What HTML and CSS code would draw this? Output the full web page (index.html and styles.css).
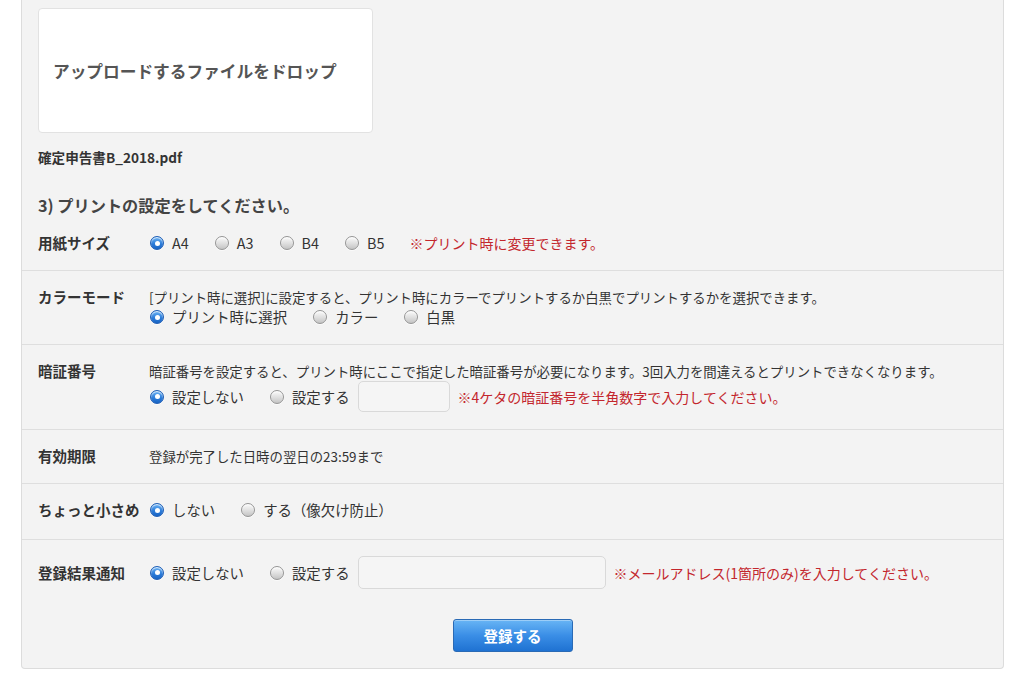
FILE: index.html
```html
<!DOCTYPE html>
<html lang="ja">
<head>
<meta charset="utf-8">
<title>プリントの設定</title>
<link rel="stylesheet" href="styles.css">
</head>
<body>
<div class="panel">
  <div class="dropzone">アップロードするファイルをドロップ</div>
  <div class="filename">確定申告書B_2018.pdf</div>
  <h2 class="heading">3) プリントの設定をしてください。</h2>

  <div class="row">
    <div class="label">用紙サイズ</div>
    <div class="content">
      <div class="line">
        <span class="opt"><span class="radio on"></span>A4</span>
        <span class="opt"><span class="radio"></span>A3</span>
        <span class="opt"><span class="radio"></span>B4</span>
        <span class="opt"><span class="radio"></span>B5</span>
        <span class="note">※プリント時に変更できます。</span>
      </div>
    </div>
  </div>

  <div class="row">
    <div class="label">カラーモード</div>
    <div class="content">
      <div class="desc">[プリント時に選択]に設定すると、プリント時にカラーでプリントするか白黒でプリントするかを選択できます。</div>
      <div class="line">
        <span class="opt"><span class="radio on"></span>プリント時に選択</span>
        <span class="opt"><span class="radio"></span>カラー</span>
        <span class="opt"><span class="radio"></span>白黒</span>
      </div>
    </div>
  </div>

  <div class="row">
    <div class="label">暗証番号</div>
    <div class="content">
      <div class="desc">暗証番号を設定すると、プリント時にここで指定した暗証番号が必要になります。3回入力を間違えるとプリントできなくなります。</div>
      <div class="line">
        <span class="opt"><span class="radio on"></span>設定しない</span>
        <span class="opt tight"><span class="radio"></span>設定する</span>
        <span class="field pin"></span>
        <span class="note">※4ケタの暗証番号を半角数字で入力してください。</span>
      </div>
    </div>
  </div>

  <div class="row">
    <div class="label">有効期限</div>
    <div class="content">
      <div class="desc">登録が完了した日時の翌日の23:59まで</div>
    </div>
  </div>

  <div class="row roomy">
    <div class="label">ちょっと小さめ</div>
    <div class="content">
      <div class="line">
        <span class="opt"><span class="radio on"></span>しない</span>
        <span class="opt"><span class="radio"></span>する（像欠け防止）</span>
      </div>
    </div>
  </div>

  <div class="row last">
    <div class="label">登録結果通知</div>
    <div class="content">
      <div class="line">
        <span class="opt"><span class="radio on"></span>設定しない</span>
        <span class="opt tight"><span class="radio"></span>設定する</span>
        <span class="field mail"></span>
        <span class="note">※メールアドレス(1箇所のみ)を入力してください。</span>
      </div>
    </div>
  </div>

  <div class="actions">
    <button class="submit" type="button">登録する</button>
  </div>
</div>
</body>
</html>
```

FILE: styles.css
```css
html, body {
  margin: 0;
  padding: 0;
  background: #ffffff;
}
body {
  font-family: "Noto Sans CJK JP", "Noto Sans", "Liberation Sans", sans-serif;
  color: #333333;
  height: 678px;
  overflow: hidden;
}
.panel {
  box-sizing: border-box;
  width: 983px;
  margin-left: 21px;
  background: #f3f3f3;
  border: 1px solid #dcdcdc;
  border-top: none;
  border-radius: 0 0 4px 4px;
  padding: 8px 0 16px;
}
.dropzone {
  box-sizing: border-box;
  margin-left: 16px;
  width: 335px;
  height: 125px;
  background: #ffffff;
  border: 1px solid #e2e2e2;
  border-radius: 4px;
  display: flex;
  align-items: center;
  padding-left: 14px;
  font-size: 16.7px;
  font-weight: bold;
  color: #555555;
}
.filename {
  margin: 14px 0 0 16px;
  font-size: 13.6px;
  font-weight: bold;
  line-height: 20px;
  color: #333333;
}
.heading {
  margin: 26px 0 0 16px;
  font-size: 16.2px;
  font-weight: bold;
  line-height: 24px;
  color: #444444;
}
.row {
  display: grid;
  grid-template-columns: 111px 1fr;
  padding: 16px 16px 17px;
  border-bottom: 1px solid #dedede;
}
.row.roomy {
  padding-bottom: 19px;
}
.row.last {
  border-bottom: none;
  align-items: center;
}
.label {
  font-size: 14.5px;
  font-weight: bold;
  line-height: 20px;
  color: #333333;
  white-space: nowrap;
}
.content {
  display: flex;
  flex-direction: column;
}
.desc {
  font-size: 13.4px;
  line-height: 20px;
  color: #333333;
  white-space: nowrap;
}
.line {
  display: flex;
  align-items: center;
  min-height: 20px;
  white-space: nowrap;
}
.opt {
  display: inline-flex;
  align-items: center;
  font-size: 14.4px;
  line-height: 20px;
  color: #333333;
  margin-right: 25px;
}
.opt.tight {
  margin-right: 8px;
}
.radio {
  box-sizing: border-box;
  width: 14px;
  height: 14px;
  margin: 0 8px 0 1px;
  border-radius: 50%;
  border: 1px solid #959595;
  background: linear-gradient(#fbfbfb, #dedede 55%, #c4c4c4);
  box-shadow: inset 0 1px 1px rgba(255,255,255,0.9), 0 1px 0 rgba(255,255,255,0.6);
  position: relative;
  flex: none;
}
.radio.on {
  border-color: #1d5db5;
  background: linear-gradient(#6ab3f5, #2a7ad8 60%, #1864c4);
}
.radio.on::after {
  content: "";
  position: absolute;
  left: 3.5px;
  top: 3.5px;
  width: 5px;
  height: 5px;
  border-radius: 50%;
  background: #ffffff;
}
.note {
  font-size: 14px;
  line-height: 20px;
  color: #c3262d;
}
.field {
  box-sizing: border-box;
  display: inline-block;
  background: #f5f5f5;
  border: 1px solid #d9d9d9;
  border-radius: 5px;
  margin-right: 8px;
}
.field.pin {
  width: 92px;
  height: 31px;
}
.field.mail {
  width: 248px;
  height: 33px;
}
.actions {
  display: flex;
  justify-content: center;
  padding-top: 13px;
}
.submit {
  box-sizing: border-box;
  width: 120px;
  height: 33px;
  border: 1px solid #2a6ab5;
  border-radius: 3px;
  background: linear-gradient(#68b5f5, #3a8ee6 50%, #1f72d2);
  color: #ffffff;
  font-family: "Noto Sans CJK JP", "Noto Sans", sans-serif;
  font-size: 14.5px;
  font-weight: bold;
  box-shadow: inset 0 1px 0 rgba(255,255,255,0.35);
  padding: 0;
}
```
